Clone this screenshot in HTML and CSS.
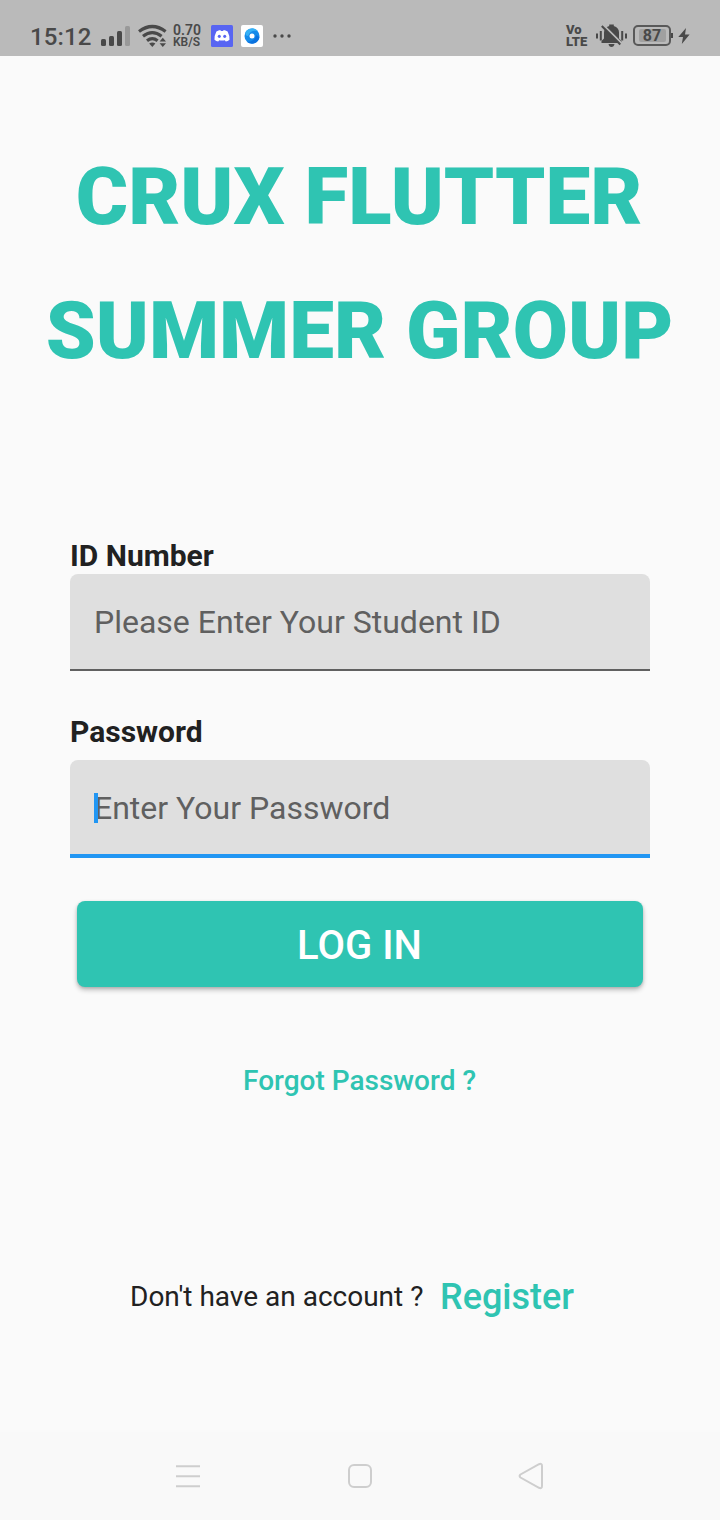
FILE: index.html
```html
<!DOCTYPE html>
<html lang="en">
<head>
<meta charset="utf-8">
<title>Crux Flutter Summer Group</title>
<link rel="stylesheet" href="styles.css">
</head>
<body>
<div class="screen">
  <header class="status">
    <span class="clock">15:12</span>
    <svg class="signal" width="29" height="20" viewBox="0 0 29 20"><g fill="#494949"><rect x="0" y="13" width="5" height="7" rx="1.5"/><rect x="8" y="10" width="5" height="10" rx="1.5"/><rect x="16" y="5" width="5" height="15" rx="1.5"/></g><rect x="24" y="0" width="5" height="20" rx="1.5" fill="#999"/></svg>
    <svg class="wifi" width="29" height="24" viewBox="0 0 29 24"><g fill="none" stroke="#494949" stroke-width="3.2"><path d="M1 7.500Q14.300-2.500 27.600 7.500"/><path d="M5 12.200Q14.300 5 23.600 12.200"/><path d="M9 16.700Q14.300 12.500 19.600 16.700"/></g><path d="M11.200 19.500Q14.300 17.500 17.400 19.500L14.300 22.900Z" fill="#494949"/><path d="M21.600 17.500L24.800 13.800L28 17.500ZM21.600 19.300H28L24.800 23Z" fill="#494949"/></svg>
    <div class="speed"><span>0.70</span><span class="unit">KB/S</span></div>
    <svg class="app" width="22" height="22" viewBox="0 0 22 22"><rect width="22" height="22" rx="1.500" fill="#5865f2"/><path d="M7.500 5.500Q8.500 5 9.300 5L9.900 6H12.100L12.700 5Q13.500 5 14.500 5.500L16.600 6.600Q18.700 10.500 18.500 14.800Q16.800 16.500 14.800 16.500L13.800 15.200Q11 15.800 8.200 15.200L7.200 16.500Q5.200 16.500 3.500 14.800Q3.300 10.500 5.400 6.600Z" fill="#fff"/><ellipse cx="8.300" cy="11.300" rx="1.500" ry="1.600" fill="#5865f2"/><ellipse cx="13.700" cy="11.300" rx="1.500" ry="1.600" fill="#5865f2"/></svg>
    <svg class="app browser" width="22" height="22" viewBox="0 0 22 22"><rect width="22" height="22" rx="2" fill="#fff"/><circle cx="11" cy="11" r="7.500" fill="#158bea"/><path d="M4.500 7A7.700 7.700 0 0 1 17 6.200Q10 4 7 11Q4 11 4.500 7Z" fill="#35b0f5"/><path d="M18.500 12A7.700 7.700 0 0 1 6 17Q14 17 15 10Z" fill="#0b72df"/><circle cx="11" cy="11" r="2.500" fill="#fff"/></svg>
    <svg class="more" width="20" height="6" viewBox="0 0 20 6" fill="#494949"><circle cx="3" cy="3" r="1.700"/><circle cx="10" cy="3" r="1.700"/><circle cx="17" cy="3" r="1.700"/></svg>
    <div class="volte"><span>Vo</span><span>LTE</span></div>
    <svg class="bell" width="31" height="26" viewBox="0 0 31 26"><path d="M5.500 20V18L8 15.500V9.500Q8 4.500 13.200 3V1.500H17.800V3Q23 4.500 23 9.500V15.500L25.500 18V20ZM12.500 21H18.500Q18 24 15.500 24T12.500 21Z" fill="#494949"/><path d="M7.500 2.200L25.800 20.500" stroke="#bababa" stroke-width="2"/><path d="M5.800 3L24.300 21.500" stroke="#494949" stroke-width="2"/><path d="M1 10.500V15.500M4.800 8V17.500M26.200 8V17.500M30 10.500V15.500" stroke="#494949" stroke-width="2"/></svg>
    <div class="battery"><span>87</span></div>
    <svg class="bolt" width="12" height="16" viewBox="0 0 12 16"><path d="M8 0L.3 9H5L3.800 16L11.600 6.600H7Z" fill="#494949"/></svg>
  </header>
  <main>
    <h1><span class="line1">CRUX FLUTTER</span><span class="line2">SUMMER GROUP</span></h1>
    <form class="form">
      <label class="label">ID Number</label>
      <div class="field"><span>Please Enter Your Student ID</span></div>
      <label class="label pw">Password</label>
      <div class="field focused"><i class="caret"></i><span>Enter Your Password</span></div>
      <button class="login" type="button"><span>LOG IN</span></button>
    </form>
    <a class="forgot">Forgot Password ?</a>
    <div class="signup"><span class="ask">Don't have an account ?</span><a class="register">Register</a></div>
  </main>
  <nav class="nav">
    <svg width="28" height="28" viewBox="0 0 28 28"><path d="M2 4.300H26M2 14.300H26M2 24.300H26"/></svg>
    <svg width="28" height="28" viewBox="0 0 28 28"><rect x="3" y="3" width="22" height="22" rx="5"/></svg>
    <svg width="28" height="28" viewBox="0 0 28 28"><path d="M2.500 12.500Q.7 14 2.500 15.500L21 25.800Q24 27 24 24V4Q24 1 21 2.200Z"/></svg>
  </nav>
</div>
</body>
</html>
```
FILE: styles.css
```css
* { box-sizing: border-box; }
body { margin: 0; background: #fafafa; font-family: Roboto, sans-serif; color: #212121; }
.screen { width: 720px; height: 1520px; display: flex; flex-direction: column; }
.status { height: 56px; background: #bababa; color: #494949; display: flex; align-items: flex-start; padding: 0 30px 0 30px; flex: none; }
.status svg { flex: none; display: block; }
.clock { width: 71px; margin-top: 23px; font-size: 24px; line-height: 28px; font-weight: 500; letter-spacing: .1px; }
.signal { margin-top: 26px; }
.wifi { margin: 24px 0 0 8px; }
.speed { margin: 24px 0 0 6px; width: 38px; font-size: 14px; line-height: 12px; font-weight: 600; }
.speed span { display: block; }
.speed .unit { font-size: 12px; }
.app { margin-top: 25px; }
.browser { margin-left: 8px; }
.more { margin: 33px 0 0 9px; }
.volte { margin: 24px 0 0 auto; width: 30px; font-size: 13px; line-height: 12px; font-weight: 900; }
.volte span { display: block; }
.bell { margin-top: 23px; }
.battery { position: relative; width: 38px; height: 21px; margin: 25px 0 0 6px; border: 2px solid #595959; border-radius: 5px; padding: 2px; }
.battery span { display: block; height: 13px; background: #a0a0a0; border-radius: 2px; width: 27px; margin: 0 auto; text-align: center; font-size: 16px; line-height: 14px; font-weight: 700; }
.battery::after { content: ""; position: absolute; right: -4px; top: 6px; width: 2px; height: 5px; background: #494949; }
.bolt { margin: 28px 0 0 7px; }
main { flex: 1; display: flex; flex-direction: column; }
h1 { margin: 94px 0 0; font-size: 80px; line-height: 94px; font-weight: 900; color: #2fc4b2; display: flex; flex-direction: column; align-items: center; gap: 40px; white-space: nowrap; }
.line1 { padding-right: 2px; }
.line2 { padding-right: 1px; }
.form { display: flex; flex-direction: column; padding: 0 70px; margin-top: 160px; }
.label { font-size: 30px; line-height: 36px; font-weight: 700; }
.pw { margin: 43px 0 10px; }
.field { position: relative; height: 97px; background: #dfdfdf; border-radius: 8px 8px 0 0; border-bottom: 2px solid #606060; padding: 29px 24px 0; font-size: 32px; line-height: 38px; color: #606060; white-space: nowrap; }
.focused { height: 98px; border-bottom: 4px solid #2196f3; }
.caret { position: absolute; left: 24px; top: 33px; width: 4px; height: 30px; background: #2196f3; }
.login { height: 86px; margin: 43px 7px 0; padding: 4px 1px 0 0; border: 0; border-radius: 8px; background: #2fc4b2; color: #fff; font: 500 40px/48px Roboto, sans-serif; box-shadow: 0 3px 5px rgba(0,0,0,.24), 0 1px 3px rgba(0,0,0,.12); }
.forgot { align-self: center; margin: 77px 0 0 0; font-size: 28px; line-height: 34px; font-weight: 500; color: #2fc4b2; padding-right: 1px; }
.signup { display: flex; align-items: center; margin: 177px 0 0 130px; line-height: 44px; }
.ask { width: 310px; font-size: 28px; white-space: nowrap; }
.register { font-size: 36px; font-weight: 500; color: #2fc4b2; }
.nav { height: 88px; background: #f9f9f9; display: flex; justify-content: space-between; align-items: center; padding: 0 174px; flex: none; }
.nav svg { fill: none; stroke: #cecece; stroke-width: 2; }
```
